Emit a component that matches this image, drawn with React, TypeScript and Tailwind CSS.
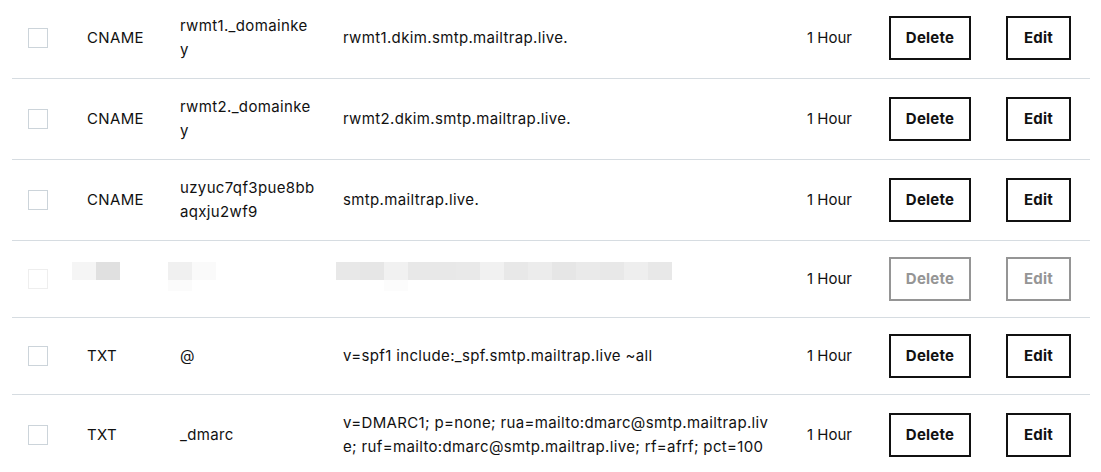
import React from "react";

type Row = {
  type: string;
  name: string[];
  value: string[];
  blurred?: boolean;
};

const rows: Row[] = [
  { type: "CNAME", name: ["rwmt1._domainke", "y"], value: ["rwmt1.dkim.smtp.mailtrap.live."] },
  { type: "CNAME", name: ["rwmt2._domainke", "y"], value: ["rwmt2.dkim.smtp.mailtrap.live."] },
  { type: "CNAME", name: ["uzyuc7qf3pue8bb", "aqxju2wf9"], value: ["smtp.mailtrap.live."] },
  { type: "", name: [], value: [], blurred: true },
  { type: "TXT", name: ["@"], value: ["v=spf1 include:_spf.smtp.mailtrap.live ~all"] },
  {
    type: "TXT",
    name: ["_dmarc"],
    value: ["v=DMARC1; p=none; rua=mailto:dmarc@smtp.mailtrap.liv", "e; ruf=mailto:dmarc@smtp.mailtrap.live; rf=afrf; pct=100"],
  },
];

const typeBlocks = ["bg-[#f5f5f5]", "bg-[#e0e0e0]"];
const nameBlocks = ["bg-[#f0f0f0]", "bg-[#fafafa]"];
const valueBlocks = [
  "bg-[#e8e8e8]",
  "bg-[#e6e6e6]",
  "bg-[#f1f1f1]",
  "bg-[#e8e8e8]",
  "bg-[#e8e8e8]",
  "bg-[#e9e9e9]",
  "bg-[#f1f1f1]",
  "bg-[#e8e8e8]",
  "bg-[#ececec]",
  "bg-[#e6e6e6]",
  "bg-[#eaeaea]",
  "bg-[#e8e8e8]",
  "bg-[#eeeeee]",
  "bg-[#e8e8e8]",
];

function Blocks({ colors }: { colors: string[] }) {
  return (
    <div className="flex">
      {colors.map((c, i) => (
        <div key={i} className={`w-[24px] h-[18px] ${c}`} />
      ))}
    </div>
  );
}

function Lines({ lines }: { lines: string[] }) {
  return (
    <div className="leading-[24px]">
      {lines.map((l, i) => (
        <div key={i} className="whitespace-pre">
          {l}
        </div>
      ))}
    </div>
  );
}

export default function App() {
  return (
    <div
      className="w-[1101px] h-[472px] overflow-hidden bg-white px-[12px] text-[15px] text-[#111111] tracking-[0.35px]"
      style={{ fontFamily: "Inter, 'Liberation Sans', Arial, sans-serif" }}
    >
      <div className="mt-[-2px] w-[1078px]">
        {rows.map((r, i) => (
          <div key={i} className="flex items-center border-b border-[#d6dce1] py-[16px] pl-[16px]">
            <div className="w-[59px] shrink-0 flex items-center">
              <div
                className={`w-[20px] h-[20px] border ${r.blurred ? "border-[#eeeeee]" : "border-[#ccd4da]"} bg-white`}
              />
            </div>
            {r.blurred ? (
              <>
                <div className="w-[93px] shrink-0 self-start mt-[5px] -ml-[15px] mr-[15px]">
                  <Blocks colors={typeBlocks} />
                </div>
                <div className="w-[163px] shrink-0 self-start mt-[5px] -ml-[12px] mr-[12px]">
                  <Blocks colors={nameBlocks} />
                  <div className="w-[24px] h-[11px] bg-[#fbfbfb]" />
                </div>
                <div className="w-[462px] shrink-0 self-start mt-[5px] -ml-[7px] mr-[7px]">
                  <Blocks colors={valueBlocks} />
                  <div className="ml-[48px] w-[24px] h-[11px] bg-[#fcfcfc]" />
                </div>
              </>
            ) : (
              <>
                <div className="w-[93px] shrink-0">{r.type}</div>
                <div className="w-[163px] shrink-0">
                  <Lines lines={r.name} />
                </div>
                <div className="w-[462px] shrink-0">
                  <Lines lines={r.value} />
                </div>
              </>
            )}
            <div className="w-[84px] shrink-0 pl-[2px] tracking-normal">1 Hour</div>
            <button
              className={`w-[82px] h-[44px] shrink-0 border-2 font-bold text-[15px] tracking-[0.2px] ${
                r.blurred ? "border-[#959595] text-[#959595]" : "border-[#111111] text-[#111111]"
              }`}
            >
              Delete
            </button>
            <button
              className={`ml-[35px] w-[65px] h-[44px] shrink-0 border-2 font-bold text-[15px] tracking-[0.2px] ${
                r.blurred ? "border-[#959595] text-[#959595]" : "border-[#111111] text-[#111111]"
              }`}
            >
              Edit
            </button>
          </div>
        ))}
      </div>
    </div>
  );
}
